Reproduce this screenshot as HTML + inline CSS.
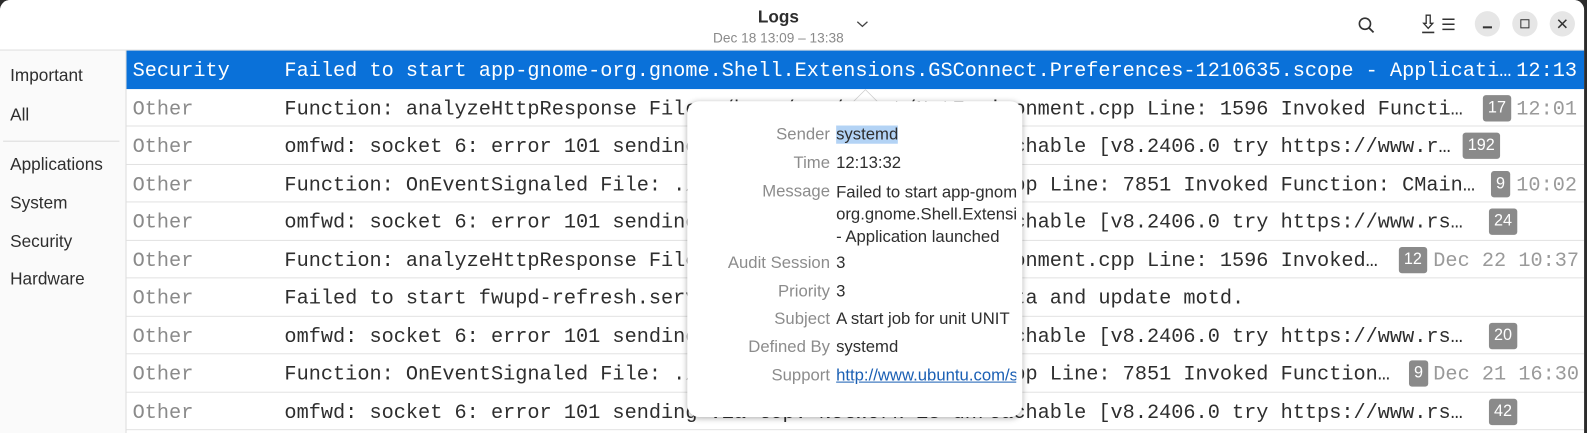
<!DOCTYPE html>
<html><head><meta charset="utf-8"><style>
*{margin:0;padding:0;box-sizing:border-box}
body{width:1587px;height:428px;overflow:hidden;background:#2b2b2b;font-family:"Liberation Sans",sans-serif;position:relative}
.sc{position:absolute;left:0;top:0;width:1568px;height:423px;transform:scale(1.0122);transform-origin:0 0}
.win{position:absolute;left:0;top:0;width:1565px;height:428px;background:#fff;border-radius:10px 10px 0 0;overflow:hidden}
.hdr{position:absolute;left:0;top:0;width:100%;height:50px;background:#fff;border-bottom:1px solid #dcdcdc}
.title{position:absolute;left:674px;width:190px;top:7px;text-align:center;font-weight:bold;font-size:17px;color:#2e2e2e}
.sub{position:absolute;left:669px;width:200px;top:30px;text-align:center;font-size:13.5px;color:#8a8a8a}
.side{position:absolute;left:0;top:50px;width:125px;height:378px;background:#fafafa;border-right:1px solid #dcdcdc}
.side div{position:absolute;left:10px;font-size:17px;color:#2e2e2e}
.list{position:absolute;left:125px;top:50px;width:1440px;height:378px;font-family:"Liberation Mono",monospace;font-size:20px}
.row{position:absolute;left:0;width:1440px;height:37.5px;border-bottom:1px solid #e2e2e2;white-space:nowrap}
.row span{position:absolute;top:9px}
.c{left:6px;color:#8a8a8a}
.m{left:156px;color:#2e2e2e}
.t{color:#9a9a9a}
.b{background:#8a8a8a;color:#fff;font-size:16px;border-radius:3px;height:26px;line-height:26px;padding:0 5px;top:6px!important;font-family:"Liberation Sans",sans-serif}
.sel{background:#0a71d9;border-bottom:none}
.sel span{color:#fff}
.pop{position:absolute;left:679px;top:100px;width:331px;height:312px;background:#fff;border-radius:12px;box-shadow:0 1px 6px rgba(0,0,0,.3);overflow:hidden}
.arrow{position:absolute;left:843px;top:89px;width:0;height:0;border-left:12px solid transparent;border-right:12px solid transparent;border-bottom:12px solid #fff;filter:drop-shadow(0 -1px 0 #ccc)}
.pop .l{position:absolute;right:190px;font-size:16.5px;color:#8c8c8c;white-space:nowrap}
.pop .v{position:absolute;left:147px;font-size:16.5px;color:#2e2e2e;white-space:nowrap;width:178px;overflow:hidden}
</style></head><body>
<div class="sc">
<div class="win">
<div class="hdr">
<div class="title">Logs</div>
<div class="sub">Dec 18 13:09 – 13:38</div>
<svg style="position:absolute;left:846px;top:20px" width="12" height="8"><path d="M1 1.5 L6 6 L11 1.5" stroke="#444" stroke-width="1.3" fill="none"/></svg>
<svg style="position:absolute;left:1341px;top:16px" width="18" height="18"><circle cx="7.5" cy="7.5" r="5.5" stroke="#333" stroke-width="1.6" fill="none"/><path d="M11.5 11.5 L16 16" stroke="#333" stroke-width="1.8"/></svg>
<svg style="position:absolute;left:1403px;top:14px" width="16" height="20"><path d="M6 1 V9 H3.5 L8 14 L12.5 9 H10 V1 Z" stroke="#333" stroke-width="1.3" fill="none"/><path d="M2 18 H14" stroke="#333" stroke-width="1.6"/></svg>
<svg style="position:absolute;left:1424px;top:17px" width="14" height="14"><path d="M1 2H13M1 7H13M1 12H13" stroke="#333" stroke-width="1.5"/></svg>
<div style="position:absolute;left:1457px;top:11px;width:25px;height:25px;border-radius:50%;background:#e6e6e6"></div>
<div style="position:absolute;left:1465px;top:26px;width:9px;height:1.5px;background:#333"></div>
<div style="position:absolute;left:1494px;top:11px;width:25px;height:25px;border-radius:50%;background:#e6e6e6"></div>
<div style="position:absolute;left:1502px;top:19px;width:9px;height:9px;border:1.5px solid #333"></div>
<div style="position:absolute;left:1531px;top:11px;width:25px;height:25px;border-radius:50%;background:#e6e6e6"></div>
<svg style="position:absolute;left:1538px;top:18px" width="11" height="11"><path d="M1.5 1.5L9.5 9.5M9.5 1.5L1.5 9.5" stroke="#333" stroke-width="1.5"/></svg>
</div>
<div class="side">
<div style="top:15px">Important</div>
<div style="top:54px">All</div>
<div style="left:3px;top:89px;width:115px;height:1px;background:#dcdcdc"></div>
<div style="top:103px">Applications</div>
<div style="top:141px">System</div>
<div style="top:179px">Security</div>
<div style="top:216px">Hardware</div>
</div>
<div class="list">
<div class="row sel" style="top:0"><span class="c">Security</span><span class="m">Failed to start app-gnome-org.gnome.Shell.Extensions.GSConnect.Preferences-1210635.scope - Applicati…</span><span style="left:1373px">12:13</span></div>
<div class="row" style="top:37.5px"><span class="c">Other</span><span class="m">Function: analyzeHttpResponse File: /home/src/agent/NetEnvironment.cpp Line: 1596 Invoked Functi…</span><span class="b" style="left:1340px">17</span><span class="t" style="left:1373px">12:01</span></div>
<div class="row" style="top:75px"><span class="c">Other</span><span class="m">omfwd: socket 6: error 101 sending via tcp: Network is unreachable [v8.2406.0 try https://www.r…</span><span class="b" style="left:1320px">192</span></div>
<div class="row" style="top:112.5px"><span class="c">Other</span><span class="m">Function: OnEventSignaled File: ./src/Handlers/EventSignal.cpp Line: 7851 Invoked Function: CMain…</span><span class="b" style="left:1348px">9</span><span class="t" style="left:1373px">10:02</span></div>
<div class="row" style="top:150px"><span class="c">Other</span><span class="m">omfwd: socket 6: error 101 sending via tcp: Network is unreachable [v8.2406.0 try https://www.rs…</span><span class="b" style="left:1346px">24</span></div>
<div class="row" style="top:187.5px"><span class="c">Other</span><span class="m">Function: analyzeHttpResponse File: /home/src/agent/NetEnvironment.cpp Line: 1596 Invoked…</span><span class="b" style="left:1257px">12</span><span class="t" style="left:1291px">Dec 22 10:37</span></div>
<div class="row" style="top:225px"><span class="c">Other</span><span class="m">Failed to start fwupd-refresh.service - Refresh fwupd metadata and update motd.</span></div>
<div class="row" style="top:262.5px"><span class="c">Other</span><span class="m">omfwd: socket 6: error 101 sending via tcp: Network is unreachable [v8.2406.0 try https://www.rs…</span><span class="b" style="left:1346px">20</span></div>
<div class="row" style="top:300px"><span class="c">Other</span><span class="m">Function: OnEventSignaled File: ./src/Handlers/EventSignal.cpp Line: 7851 Invoked Function…</span><span class="b" style="left:1267px">9</span><span class="t" style="left:1291px">Dec 21 16:30</span></div>
<div class="row" style="top:337.5px"><span class="c">Other</span><span class="m">omfwd: socket 6: error 101 sending via tcp: Network is unreachable [v8.2406.0 try https://www.rs…</span><span class="b" style="left:1346px">42</span></div>
</div>
<div class="arrow"></div>
<div class="pop">
<div class="l" style="top:24px">Sender</div><div class="v" style="top:24px"><span style="background:#b3d3f5">systemd</span></div>
<div class="l" style="top:52px">Time</div><div class="v" style="top:52px">12:13:32</div>
<div class="l" style="top:80px">Message</div><div class="v" style="top:79px;line-height:22px">Failed to start app-gnome-<br>org.gnome.Shell.Extensions<br>- Application launched</div>
<div class="l" style="top:151px">Audit Session</div><div class="v" style="top:151px">3</div>
<div class="l" style="top:179px">Priority</div><div class="v" style="top:179px">3</div>
<div class="l" style="top:206px">Subject</div><div class="v" style="top:206px">A start job for unit UNIT</div>
<div class="l" style="top:234px">Defined By</div><div class="v" style="top:234px">systemd</div>
<div class="l" style="top:262px">Support</div><div class="v" style="top:262px;color:#1a5fb4;text-decoration:underline">http://www.ubuntu.com/support</div>
</div>
</div>
</div>
</body></html>
